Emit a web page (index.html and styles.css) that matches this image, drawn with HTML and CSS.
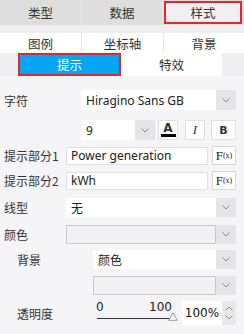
FILE: index.html
```html
<!DOCTYPE html>
<html>
<head>
<meta charset="utf-8">
<link rel="stylesheet" href="styles.css">
</head>
<body>
<div class="panel">
  <div class="tabs1">
    <div class="t1">类型</div>
    <div class="t1">数据</div>
    <div class="t1 active">样式</div>
  </div>
  <div class="band"></div>
  <div class="tabs2">
    <div class="t2">图例</div>
    <div class="t2">坐标轴</div>
    <div class="t2">背景</div>
  </div>
  <div class="tabs3">
    <div class="t3 on">提示</div>
    <div class="t3">特效</div>
  </div>

  <div class="form">
    <div class="row tall">
      <div class="lab w77">字符</div>
      <div class="sel grow"><span class="val">Hiragino Sans GB</span><span class="arr"><svg width="8" height="5" viewBox="0 0 8 5"><path d="M0.5 0.5 L4 4 L7.5 0.5" fill="none" stroke="#8a8a8a" stroke-width="1"/></svg></span></div>
    </div>
    <div class="row tall r2">
      <div class="lab w77"></div>
      <div class="sel size"><span class="val">9</span><span class="arr"><svg width="8" height="5" viewBox="0 0 8 5"><path d="M0.5 0.5 L4 4 L7.5 0.5" fill="none" stroke="#8a8a8a" stroke-width="1"/></svg></span></div>
      <div class="btn ba"><span class="a">A</span><span class="bar"></span></div>
      <div class="btn bi">I</div>
      <div class="btn bb">B</div>
    </div>
    <div class="row">
      <div class="lab w62">提示部分1</div>
      <div class="inp grow">Power generation</div>
      <div class="fx">F<small>(x)</small></div>
    </div>
    <div class="row">
      <div class="lab w62">提示部分2</div>
      <div class="inp grow">kWh</div>
      <div class="fx">F<small>(x)</small></div>
    </div>
    <div class="row r5">
      <div class="lab w62">线型</div>
      <div class="sel grow"><span class="val">无</span><span class="arr"><svg width="8" height="5" viewBox="0 0 8 5"><path d="M0.5 0.5 L4 4 L7.5 0.5" fill="none" stroke="#8a8a8a" stroke-width="1"/></svg></span></div>
    </div>
    <div class="row r5">
      <div class="lab w62">颜色</div>
      <div class="sel grow color"><span class="val"></span><span class="arr"><svg width="8" height="5" viewBox="0 0 8 5"><path d="M0.5 0.5 L4 4 L7.5 0.5" fill="none" stroke="#8a8a8a" stroke-width="1"/></svg></span></div>
    </div>
    <div class="row ind">
      <div class="lab w76">背景</div>
      <div class="sel grow"><span class="val">颜色</span><span class="arr"><svg width="8" height="5" viewBox="0 0 8 5"><path d="M0.5 0.5 L4 4 L7.5 0.5" fill="none" stroke="#8a8a8a" stroke-width="1"/></svg></span></div>
    </div>
    <div class="row ind r8">
      <div class="lab w76"></div>
      <div class="sel grow color"><span class="val"></span><span class="arr"><svg width="8" height="5" viewBox="0 0 8 5"><path d="M0.5 0.5 L4 4 L7.5 0.5" fill="none" stroke="#8a8a8a" stroke-width="1"/></svg></span></div>
    </div>
    <div class="row ind r9">
      <div class="lab w76">透明度</div>
      <div class="slider">
        <div class="nums"><span>0</span><span>100</span></div>
        <div class="track"></div>
        <svg class="thumb" width="10" height="9" viewBox="0 0 10 9"><path d="M5 0.8 L9.2 8.3 L0.8 8.3 Z" fill="#fff" stroke="#9a9a9a" stroke-width="1"/></svg>
      </div>
      <div class="num">100%</div>
      <div class="spin">
        <svg width="8" height="5" viewBox="0 0 8 5"><path d="M0.5 4.5 L4 1 L7.5 4.5" fill="none" stroke="#888" stroke-width="1"/></svg>
        <svg width="8" height="5" viewBox="0 0 8 5"><path d="M0.5 0.5 L4 4 L7.5 0.5" fill="none" stroke="#888" stroke-width="1"/></svg>
      </div>
    </div>
  </div>
</div>
</body>
</html>
```
FILE: styles.css
```css
* { box-sizing: border-box; }
html, body { margin: 0; padding: 0; }
body {
  width: 244px;
  height: 334px;
  background: #f5f5f7;
  font-family: "Noto Sans", "Noto Sans CJK SC", sans-serif;
  font-size: 12px;
  color: #333;
  overflow: hidden;
}
.tabs1 {
  display: grid;
  grid-template-columns: 82px 81px 81px;
  height: 25px;
  background: #dedede;
}
.t1 {
  display: flex;
  align-items: center;
  justify-content: center;
  border-right: 1px solid #ececec;
  font-family: "Noto Sans CJK SC", sans-serif;
  font-size: 12.5px;
}
.t1:last-child { border-right: none; }
.t1.active {
  background: #f0f0f3;
  border: 2px solid #e8242e;
  margin: 1px 2px 1px 1px;
}
.band { height: 8px; background: #efeff1; }
.tabs2 {
  display: grid;
  grid-template-columns: 82px 82px 80px;
  height: 20px;
  background: #fff;
}
.t2 {
  display: flex;
  align-items: center;
  justify-content: center;
  border-right: 1px solid #e6e6e6;
  font-family: "Noto Sans CJK SC", sans-serif;
  font-size: 12.5px;
}
.t2:last-child { border-right: none; }
.tabs3 {
  display: flex;
  height: 23px;
  background: #efeff1;
  padding-left: 18px;
}
.t3 {
  width: 101px;
  display: flex;
  align-items: center;
  justify-content: center;
  background: #fff;
  font-family: "Noto Sans CJK SC", sans-serif;
  font-size: 12.5px;
}
.t3.on {
  width: 103px;
  background: #06a6f7;
  color: #fff;
  border: 2px solid #e8242e;
}
.form {
  display: flex;
  flex-direction: column;
  gap: 6px;
  padding: 14px 8px 0 4px;
}
.row {
  display: flex;
  align-items: center;
  height: 19px;
}
.row.tall { height: 20px; }
.r2 { margin-top: 4px; }
.r5 { margin-top: 2px; }
.r8 { margin-top: 1px; }
.r9 { height: 24px; }
.ind { padding-left: 13px; }
.lab {
  flex: none;
  font-family: "Noto Sans CJK SC", sans-serif;
  font-size: 12px;
  color: #333;
}
.w77 { width: 77px; }
.w62 { width: 62px; }
.w76 { width: 76px; }
.grow { flex: 1; min-width: 0; }
.sel {
  display: flex;
  height: 100%;
  background: #fff;
}
.sel .val {
  flex: 1;
  display: flex;
  align-items: center;
  padding-left: 5px;
  font-family: "Noto Sans", "Noto Sans CJK SC", sans-serif;
  color: #222;
}
.sel .arr {
  width: 20px;
  flex: none;
  background: #e5e5e7;
  display: flex;
  align-items: center;
  justify-content: center;
}
.sel.size { width: 74px; flex: none; }
.sel.color .val {
  background: #f1f1f3;
  border: 1px solid #c9c9cb;
}
.btn {
  height: 100%;
  background: #fff;
  border: 1px solid #e0e0e2;
  display: flex;
  align-items: center;
  justify-content: center;
  flex: none;
}
.ba {
  width: 20px;
  margin-left: 3px;
  flex-direction: column;
}
.ba .a {
  font-family: "DejaVu Sans", sans-serif;
  font-weight: bold;
  font-size: 12px;
  line-height: 10px;
}
.ba .bar {
  width: 15px;
  height: 3px;
  background: #000;
  margin-top: 1px;
}
.bi {
  width: 20px;
  margin-left: 7px;
  font-family: "Liberation Serif", serif;
  font-style: italic;
  font-size: 13px;
}
.bb {
  width: 25px;
  margin-left: 6px;
  font-family: "DejaVu Sans", sans-serif;
  font-weight: bold;
  font-size: 11px;
}
.inp {
  height: 18px;
  background: #fff;
  border: 1px solid #e0e0e2;
  display: flex;
  align-items: center;
  padding-left: 4px;
  color: #222;
}
.fx {
  width: 24px;
  height: 19px;
  margin-left: 4px;
  flex: none;
  background: #fff;
  border: 1px solid #d8d8da;
  display: flex;
  align-items: center;
  justify-content: center;
  font-family: "Liberation Serif", serif;
  font-size: 13px;
  color: #222;
}
.fx small { font-size: 8px; }
.slider {
  position: relative;
  width: 89px;
  height: 24px;
  flex: none;
}
.nums {
  display: flex;
  justify-content: space-between;
  padding: 0 10px 0 3px;
  font-family: "DejaVu Sans", sans-serif;
  font-size: 12px;
  line-height: 13px;
  color: #222;
}
.track {
  margin: 4px 0 0 4px;
  width: 75px;
  height: 1px;
  background: #333;
}
.thumb {
  position: absolute;
  left: 75px;
  top: 11px;
}
.num {
  width: 40px;
  height: 24px;
  background: #fff;
  display: flex;
  align-items: center;
  justify-content: center;
  font-family: "DejaVu Sans", sans-serif;
  font-size: 12px;
  color: #111;
}
.spin {
  width: 14px;
  height: 24px;
  background: #e8e8ea;
  display: flex;
  flex-direction: column;
  align-items: center;
  justify-content: center;
  gap: 4px;
}
```
